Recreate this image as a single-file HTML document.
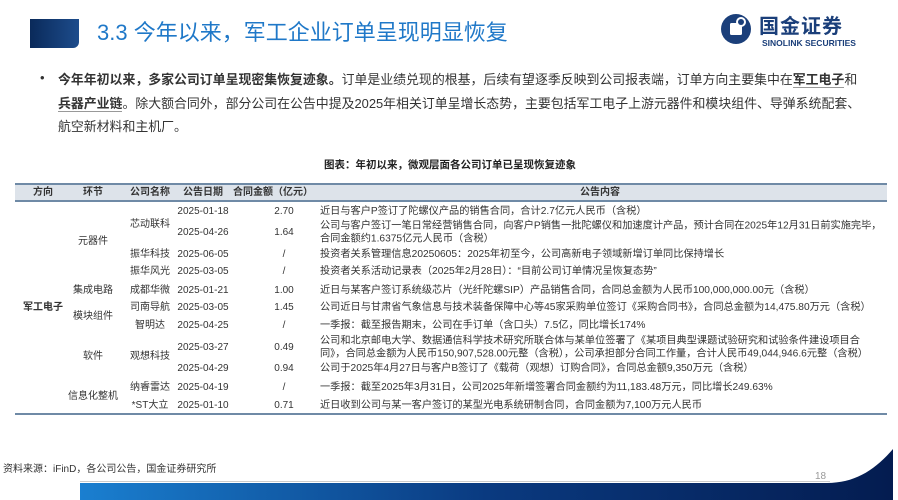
<!DOCTYPE html>
<html><head><meta charset="utf-8">
<style>
*{margin:0;padding:0;box-sizing:border-box}
body{width:898px;height:500px;overflow:hidden;background:#fff;position:relative;font-family:"Liberation Sans","Noto Sans CJK SC",sans-serif;color:#333}
.a{position:absolute;white-space:nowrap}
.t{font-size:10px;color:#333;line-height:12.5px}
.k{font-size:10.2px}
.c{transform:translateX(-50%)}
.m{transform:translate(-50%,-50%)}
.l{transform:translateY(-50%)}
u{text-decoration:none;border-bottom:1.5px solid #999}
</style></head><body>
<div class="a" style="left:30px;top:19px;width:49px;height:29px;background:linear-gradient(90deg,#0a2a5a,#1d4c8c);border-bottom-right-radius:6px"></div>
<div class="a" style="left:97px;top:18px;font-size:22px;line-height:30px;color:#1f78c8">3.3 今年以来，军工企业订单呈现明显恢复</div>
<svg class="a" style="left:720px;top:13px" width="32" height="32" viewBox="0 0 32 32"><circle cx="16" cy="16" r="15" fill="#1b3f7a"/><rect x="10" y="10" width="12" height="12" rx="1.5" fill="#fff"/><circle cx="21" cy="9" r="5" fill="#fff"/><circle cx="21" cy="9" r="3" fill="#1b3f7a"/></svg>
<div class="a" style="left:759px;top:15px;font-size:20px;line-height:24px;color:#1b3f7a;font-weight:bold;letter-spacing:1px">国金证券</div>
<div class="a" style="left:762px;top:38px;font-size:8.5px;line-height:11px;color:#1b3f7a;font-weight:bold">SINOLINK SECURITIES</div>

<div class="a" style="left:40px;top:70px;font-size:13px;color:#333">•</div>
<div class="a" style="left:58px;top:68px;font-size:12.9px;line-height:23.5px;color:#333"><b>今年年初以来，多家公司订单呈现密集恢复迹象。</b>订单是业绩兑现的根基，后续有望逐季反映到公司报表端，订单方向主要集中在<b><u>军工电子</u></b>和<br><b><u>兵器产业链</u></b>。除大额合同外，部分公司在公告中提及2025年相关订单呈增长态势，主要包括军工电子上游元器件和模块组件、导弹系统配套、<br>航空新材料和主机厂。</div>

<div class="a c" style="left:450px;top:157px;font-size:10.5px;font-weight:bold;color:#222">图表：年初以来，微观层面各公司订单已呈现恢复迹象</div>

<div class="a" style="left:15px;top:183px;width:872px;height:19px;background:#dde3ea;border-top:2px solid #6f8aa6;border-bottom:2px solid #6f8aa6"></div>
<div class="a" style="left:15px;top:413px;width:872px;height:2px;background:#6f8aa6"></div>
<div class="a t m" style="left:43px;top:193px;font-weight:bold">方向</div>
<div class="a t m" style="left:93px;top:193px;font-weight:bold">环节</div>
<div class="a t m" style="left:150px;top:193px;font-weight:bold">公司名称</div>
<div class="a t m" style="left:203px;top:193px;font-weight:bold">公告日期</div>
<div class="a t m" style="left:273px;top:193px;font-weight:bold">合同金额（亿元）</div>
<div class="a t m" style="left:600px;top:193px;font-weight:bold">公告内容</div>

<div class="a t m" style="left:43px;top:308px;font-weight:bold">军工电子</div>
<div class="a t m" style="left:93px;top:242px">元器件</div>
<div class="a t m" style="left:93px;top:291px">集成电路</div>
<div class="a t m" style="left:93px;top:317px">模块组件</div>
<div class="a t m" style="left:93px;top:357px">软件</div>
<div class="a t m" style="left:93px;top:397px">信息化整机</div>

<div class="a t m" style="left:150px;top:225px">芯动联科</div>
<div class="a t m" style="left:150px;top:255px">振华科技</div>
<div class="a t m" style="left:150px;top:272px">振华风光</div>
<div class="a t m" style="left:150px;top:291px">成都华微</div>
<div class="a t m" style="left:150px;top:308px">司南导航</div>
<div class="a t m" style="left:150px;top:326px">智明达</div>
<div class="a t m" style="left:150px;top:357px">观想科技</div>
<div class="a t m" style="left:150px;top:388px">纳睿雷达</div>
<div class="a t m" style="left:150px;top:406px">*ST大立</div>

<div class="a t m" style="left:203px;top:212px">2025-01-18</div>
<div class="a t m" style="left:203px;top:233px">2025-04-26</div>
<div class="a t m" style="left:203px;top:255px">2025-06-05</div>
<div class="a t m" style="left:203px;top:272px">2025-03-05</div>
<div class="a t m" style="left:203px;top:291px">2025-01-21</div>
<div class="a t m" style="left:203px;top:308px">2025-03-05</div>
<div class="a t m" style="left:203px;top:326px">2025-04-25</div>
<div class="a t m" style="left:203px;top:348px">2025-03-27</div>
<div class="a t m" style="left:203px;top:369px">2025-04-29</div>
<div class="a t m" style="left:203px;top:388px">2025-04-19</div>
<div class="a t m" style="left:203px;top:406px">2025-01-10</div>

<div class="a t m" style="left:284px;top:212px">2.70</div>
<div class="a t m" style="left:284px;top:233px">1.64</div>
<div class="a t m" style="left:284px;top:255px">/</div>
<div class="a t m" style="left:284px;top:272px">/</div>
<div class="a t m" style="left:284px;top:291px">1.00</div>
<div class="a t m" style="left:284px;top:308px">1.45</div>
<div class="a t m" style="left:284px;top:326px">/</div>
<div class="a t m" style="left:284px;top:348px">0.49</div>
<div class="a t m" style="left:284px;top:369px">0.94</div>
<div class="a t m" style="left:284px;top:388px">/</div>
<div class="a t m" style="left:284px;top:406px">0.71</div>

<div class="a t k l" style="left:320px;top:212px">近日与客户P签订了陀螺仪产品的销售合同，合计2.7亿元人民币（含税）</div>
<div class="a t k l" style="left:320px;top:233px">公司与客户签订一笔日常经营销售合同，向客户P销售一批陀螺仪和加速度计产品，预计合同在2025年12月31日前实施完毕，<br>合同金额约1.6375亿元人民币（含税）</div>
<div class="a t k l" style="left:320px;top:255px">投资者关系管理信息20250605：2025年初至今，公司高新电子领域新增订单同比保持增长</div>
<div class="a t k l" style="left:320px;top:272px">投资者关系活动记录表（2025年2月28日）：“目前公司订单情况呈恢复态势”</div>
<div class="a t k l" style="left:320px;top:291px">近日与某客户签订系统级芯片（光纤陀螺SIP）产品销售合同，合同总金额为人民币100,000,000.00元（含税）</div>
<div class="a t k l" style="left:320px;top:308px">公司近日与甘肃省气象信息与技术装备保障中心等45家采购单位签订《采购合同书》，合同总金额为14,475.80万元（含税）</div>
<div class="a t k l" style="left:320px;top:326px">一季报：截至报告期末，公司在手订单（含口头）7.5亿，同比增长174%</div>
<div class="a t k l" style="left:320px;top:348px">公司和北京邮电大学、数据通信科学技术研究所联合体与某单位签署了《某项目典型课题试验研究和试验条件建设项目合<br>同》，合同总金额为人民币150,907,528.00元整（含税），公司承担部分合同工作量，合计人民币49,044,946.6元整（含税）</div>
<div class="a t k l" style="left:320px;top:369px">公司于2025年4月27日与客户B签订了《载荷（观想）订购合同》，合同总金额9,350万元（含税）</div>
<div class="a t k l" style="left:320px;top:388px">一季报：截至2025年3月31日，公司2025年新增签署合同金额约为11,183.48万元，同比增长249.63%</div>
<div class="a t k l" style="left:320px;top:406px">近日收到公司与某一客户签订的某型光电系统研制合同，合同金额为7,100万元人民币</div>

<div class="a" style="left:3px;top:460px;font-size:10px;color:#333">资料来源：iFinD，各公司公告，国金证券研究所</div>
<div class="a" style="left:815px;top:471px;font-size:10px;color:#999">18</div>
<div class="a" style="left:80px;top:481px;width:750px;height:1px;background:#ccc"></div>
<svg class="a" style="left:80px;top:445px" width="818" height="55" viewBox="0 0 818 55">
<defs><linearGradient id="g" x1="0" x2="1" y1="0" y2="0"><stop offset="0" stop-color="#1a7fd0"/><stop offset="0.5" stop-color="#0a3a80"/><stop offset="1" stop-color="#041c50"/></linearGradient></defs>
<path d="M0 38 L747 38 C775 38 795 25 813 4 L813 55 L0 55 Z" fill="url(#g)"/>
</svg>
</body></html>
